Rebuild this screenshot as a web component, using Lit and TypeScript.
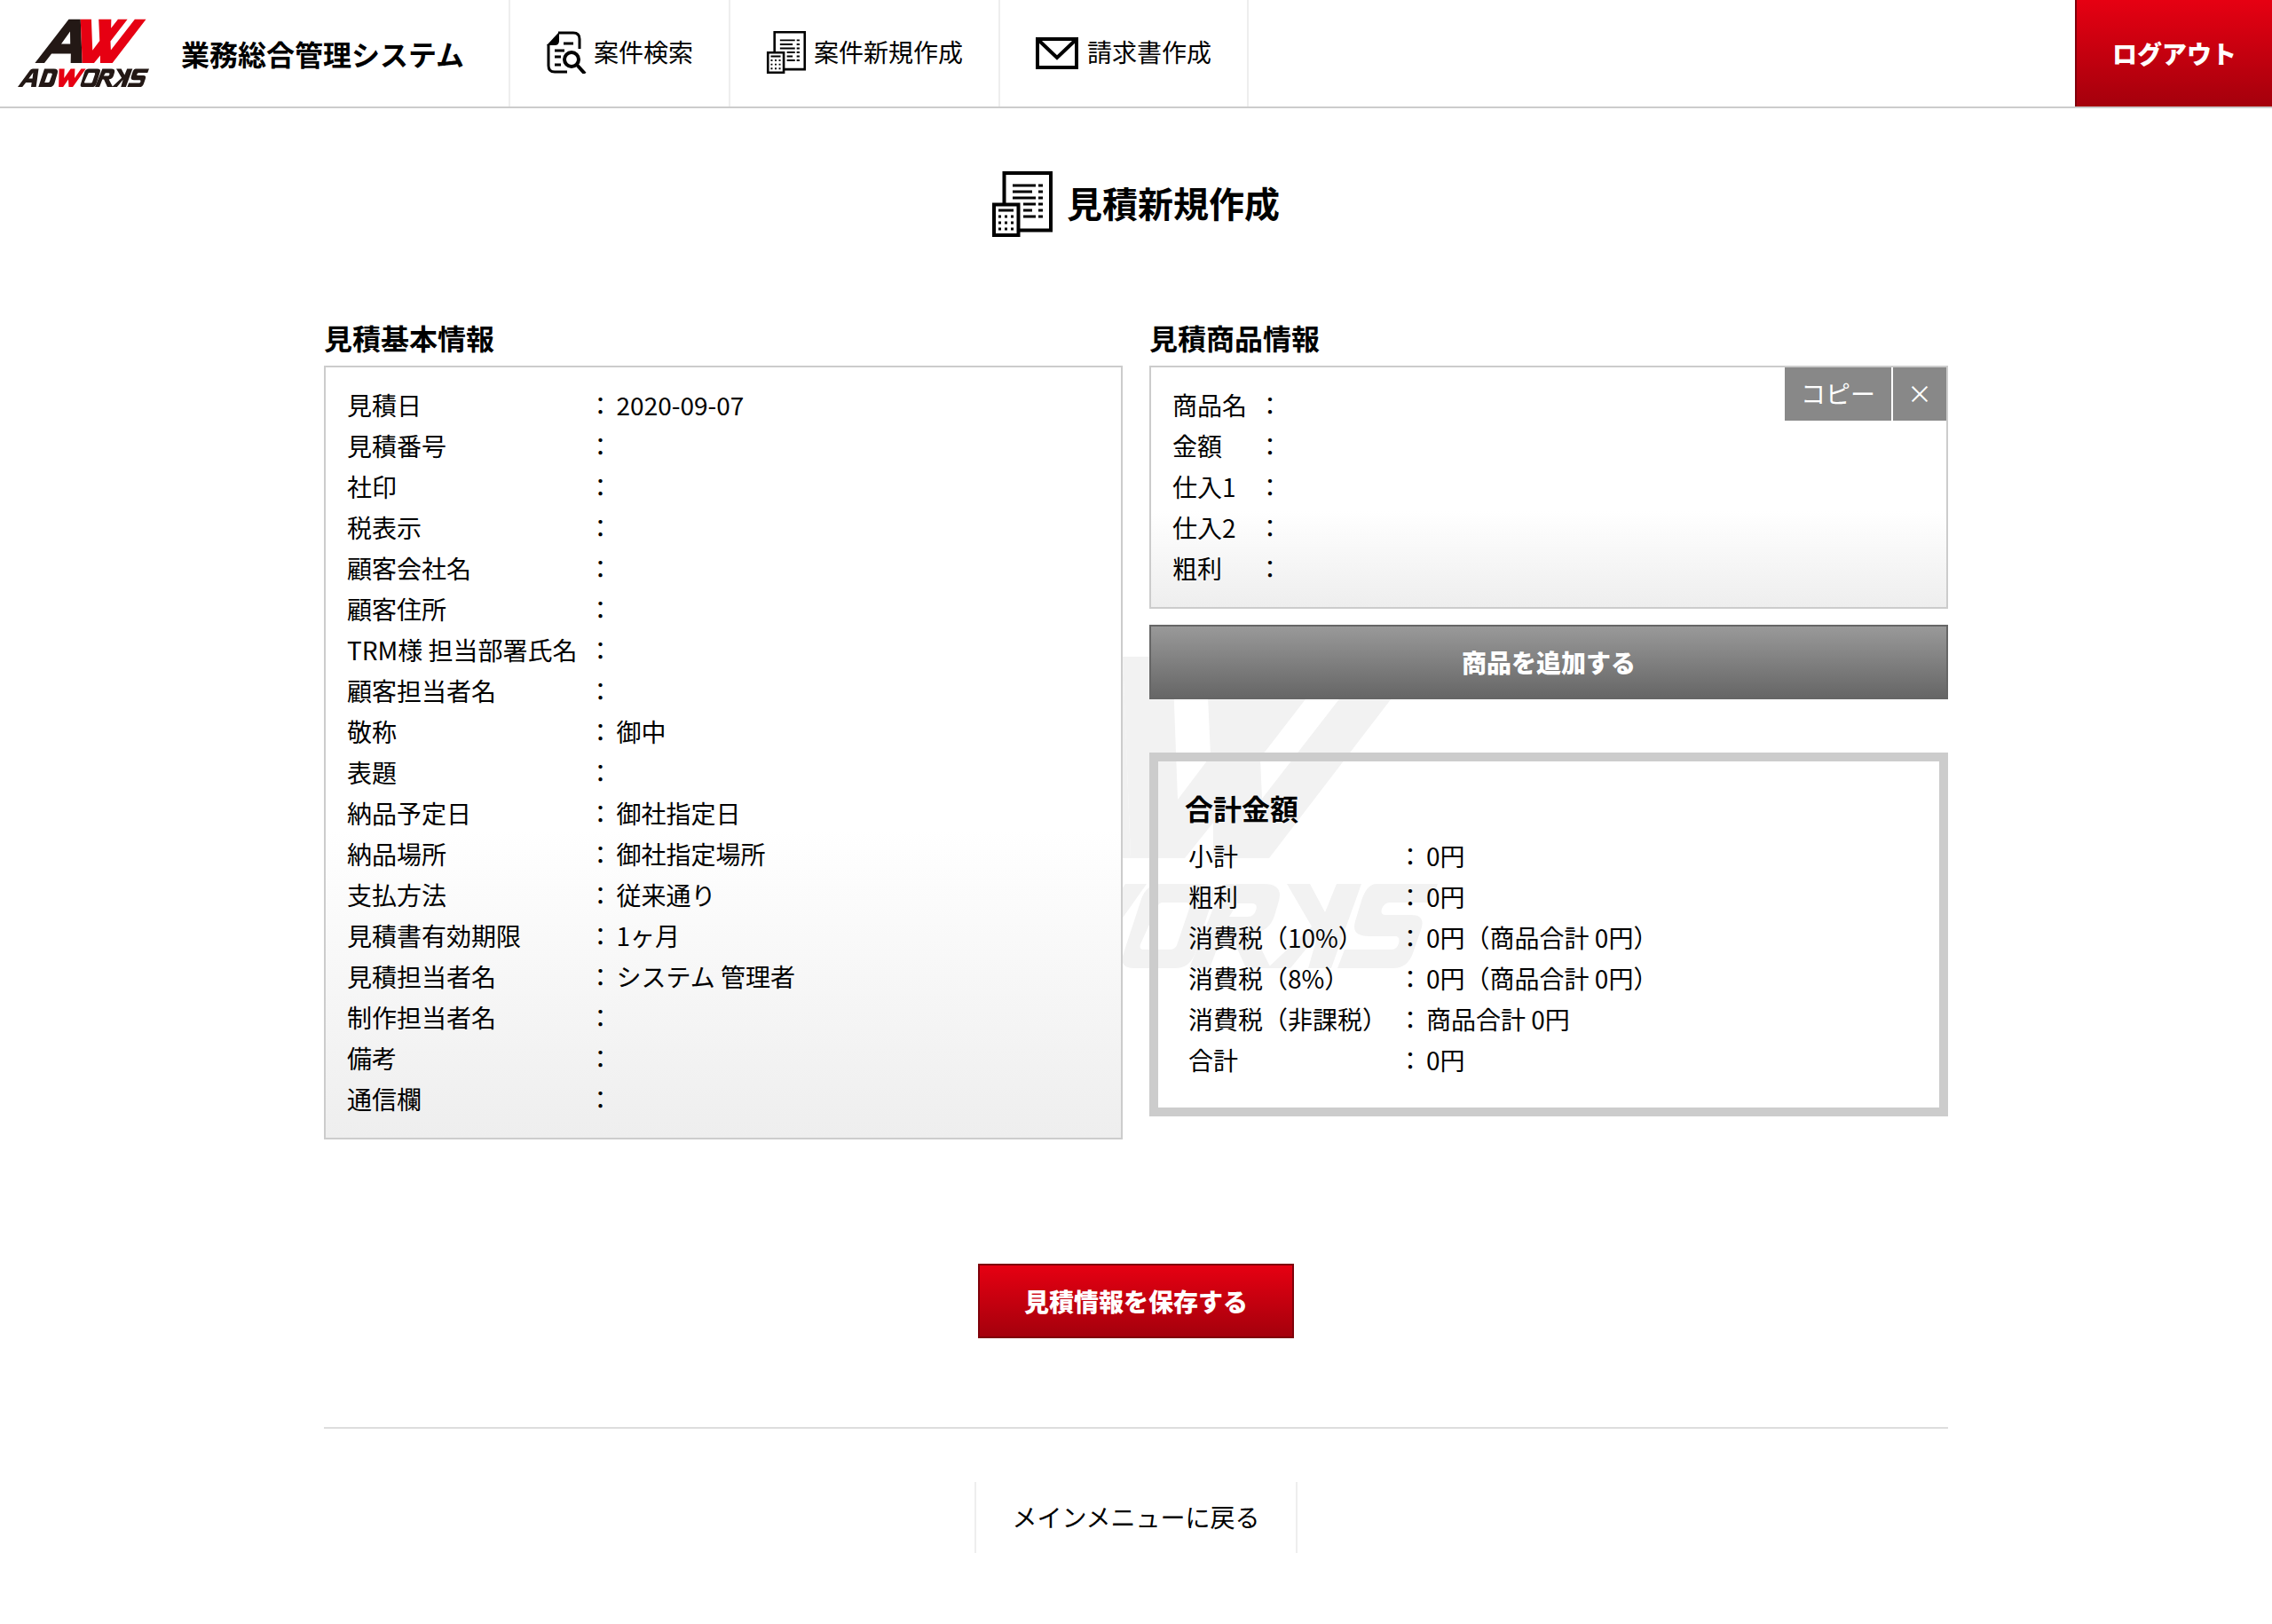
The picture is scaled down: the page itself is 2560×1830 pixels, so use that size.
import { LitElement, html, css, nothing } from "lit";
import { customElement } from "lit/decorators.js";

type Row = [label: string, value?: string];

const basicRows: Row[] = [
  ["見積日", "2020-09-07"],
  ["見積番号"],
  ["社印"],
  ["税表示"],
  ["顧客会社名"],
  ["顧客住所"],
  ["TRM様 担当部署氏名"],
  ["顧客担当者名"],
  ["敬称", "御中"],
  ["表題"],
  ["納品予定日", "御社指定日"],
  ["納品場所", "御社指定場所"],
  ["支払方法", "従来通り"],
  ["見積書有効期限", "1ヶ月"],
  ["見積担当者名", "システム 管理者"],
  ["制作担当者名"],
  ["備考"],
  ["通信欄"],
];

const productRows: Row[] = [["商品名"], ["金額"], ["仕入1"], ["仕入2"], ["粗利"]];

const totalRows: Row[] = [
  ["小計", "0円"],
  ["粗利", "0円"],
  ["消費税（10%）", "0円（商品合計 0円）"],
  ["消費税（8%）", "0円（商品合計 0円）"],
  ["消費税（非課税）", "商品合計 0円"],
  ["合計", "0円"],
];

const table = (rows: Row[]) => html`
  <table>
    <tbody>
      ${rows.map(
        ([label, value]) => html`<tr>
          <th scope="row">${label}</th>
          <td>：</td>
          <td>${value ?? nothing}</td>
        </tr>`
      )}
    </tbody>
  </table>
`;

/* Brand mark: big AW monogram over the slanted ADWORKS wordmark. */
const logo = (className: string, label: string) => html`
  <svg class=${className} viewBox="0 0 680 352" role="img" aria-label=${label}>
    <path class="ink" fill-rule="evenodd" d="M264 0H325L334 227H274L275 178H175L138 227H89ZM271 63L225 128H272Z" />
    <path
      class="accent"
      d="M325 0H381L387 161L424 112L419 0H484L483 46L519 0H568L480 114L482 160L606 0H664L490 227H427V187L395 227H334Z"
    />
    <path class="ink" fill-rule="evenodd" d="M0 351L64 263Q69 256 78 256H108L95 351H69L72 328H42L24 351ZM57 307H76L80 276Z" />
    <path
      class="ink"
      fill-rule="evenodd"
      d="M138 256H188Q212 256 206 278L190 332Q184 351 164 351H107ZM156 279L139 328H156Q163 328 165 322L178 286Q180 279 173 279Z"
    />
    <path class="accent" d="M214 256H242L240 305L274 256H296L294 305L328 256H352L285 351H264L262 312L235 351H212Z" />
    <path
      class="ink"
      fill-rule="evenodd"
      d="M368 256H412Q432 256 426 274L407 333Q401 351 384 351H338Q320 351 326 334L346 273Q352 256 368 256ZM370 277Q366 277 364 282L345 324Q343 330 349 330H378Q384 330 386 325L400 284Q402 277 396 277Z"
    />
    <path
      class="ink"
      fill-rule="evenodd"
      d="M438 256H484Q506 256 501 275L496 292Q490 310 472 311L492 351H464L446 311H438L423 351H400ZM454 278L445 293H466Q473 293 475 286Q478 278 470 278Z"
    />
    <path class="ink" d="M510 256H536L553 288L566 256H594L560 351H534L545 313L514 351H488L538 304Z" />
    <path
      class="ink"
      d="M611 256H680L672 277H626Q620 277 617 284Q615 291 621 291H650Q667 291 661 308L652 334Q646 351 630 351H567L575 330H628Q634 330 636 323Q638 315 632 315H602Q582 315 587 298L594 275Q600 256 611 256Z"
    />
  </svg>
`;

const searchIcon = html`
  <svg class="icon" viewBox="0 0 46 48" aria-hidden="true">
    <path class="line" d="M14 2H31Q38 2 38 9V20M3 15V39Q3 46 10 46H24" />
    <path d="M1 16L15 1V11Q15 16 10 16Z" />
    <path class="line" d="M20 14H31M10 22H21M10 29H17M10 38H17" />
    <circle class="line thick" cx="29" cy="32" r="8" />
    <path class="line thick" d="M35 38L44 48" />
  </svg>
`;

const estimateIcon = (className: string) => html`
  <svg class=${className} viewBox="0 0 68 74" aria-hidden="true">
    <path class="frame" d="M13.500 36V2H66V66.500H31" />
    <path class="frame" d="M2 37.500H29.500V72H2Z" />
    <path
      class="bars"
      d="M23 16H49M23 23H45M23 30H49M35 37H49M35 44H45M35 51H49M52 16H57M52 23H57M52 30H57M52 37H57M52 44H57M52 51H57M7 44H24"
    />
    <path class="bars" d="M7 51H10M14 51H17M21 51H24M7 58H10M14 58H17M21 58H24M7 65H10M14 65H17M21 65H24" />
  </svg>
`;

const mailIcon = html`
  <svg class="icon mail" viewBox="0 0 50 48" aria-hidden="true">
    <path class="line thick" d="M2 9H46V41H2Z" />
    <path class="line thick" d="M3 10L24 30L45 10" />
  </svg>
`;

@customElement("app-root")
export class AppRoot extends LitElement {
  static styles = css`
    :host {
      display: block;
      position: relative;
      min-height: 100vh;
      background: #fff;
      color: #000;
      font-family: "Noto Sans CJK JP", sans-serif;
      font-size: 28px;
      font-weight: 400;
      line-height: 44px;
    }
    * {
      box-sizing: border-box;
    }
    h1,
    h2 {
      margin: 0;
    }
    a {
      color: inherit;
      text-decoration: none;
    }
    button {
      font: inherit;
      color: #fff;
      cursor: pointer;
      margin: 0;
      border-radius: 0;
    }
    svg {
      display: block;
      flex: none;
    }
    .header {
      display: flex;
      height: 122px;
      border-bottom: 2px solid #ccc;
      background: #fff;
    }
    .brand {
      display: flex;
      align-items: center;
      gap: 36px;
      padding: 0 50px 0 20px;
      font-size: 32px;
      font-weight: 700;
      white-space: nowrap;
    }
    .logo {
      width: 148px;
      height: 78px;
    }
    .ink {
      fill: #231815;
    }
    .accent {
      fill: #e60012;
    }
    .nav {
      display: flex;
      border-right: 2px solid #eee;
    }
    .nav a {
      display: flex;
      align-items: center;
      gap: 8px;
      padding: 0 40px 2px;
      border-left: 2px solid #eee;
      white-space: nowrap;
    }
    .nav span {
      padding-bottom: 2px;
    }
    .icon {
      width: 46px;
      height: 48px;
    }
    .mail {
      width: 50px;
    }
    .line,
    .frame,
    .bars {
      fill: none;
      stroke: #000;
      stroke-width: 3;
    }
    .frame {
      stroke-width: 4;
    }
    .thick {
      stroke-width: 4;
    }
    .red {
      background: linear-gradient(#e60012, #a4000c);
      border: 2px solid #7f000a;
      font-weight: 900;
    }
    .logout {
      margin-left: auto;
      border-width: 0 0 0 2px;
      padding: 0 40px;
    }
    .watermark {
      position: absolute;
      z-index: 0;
      left: 50%;
      top: 740px;
      width: 680px;
      height: 352px;
      transform: translateX(-50%);
    }
    .watermark .ink,
    .watermark .accent {
      fill: #f2f2f2;
    }
    .main {
      position: relative;
      z-index: 1;
      max-width: 1830px;
      margin: 0 auto;
      padding: 70px 0 80px;
      display: flex;
      flex-direction: column;
      align-items: center;
    }
    .title {
      display: flex;
      align-items: center;
      gap: 16px;
      font-size: 40px;
      line-height: 72px;
    }
    .title span {
      padding-bottom: 4px;
    }
    .title-icon {
      width: 68px;
      height: 74px;
    }
    .columns {
      display: grid;
      grid-template-columns: 1fr 1fr;
      gap: 30px;
      align-items: start;
      width: 100%;
      margin-top: 90px;
    }
    h2 {
      font-size: 32px;
      padding-bottom: 10px;
    }
    .panel {
      position: relative;
      padding: 20px;
      border: 2px solid #ccc;
      background: linear-gradient(#fff 60%, #eee);
    }
    table {
      border-collapse: collapse;
    }
    th,
    td {
      padding: 0 2px 2px;
      font-weight: inherit;
      height: 46px;
      text-align: left;
      white-space: nowrap;
    }
    th {
      padding: 0 10px 2px 4px;
    }
    .tools {
      position: absolute;
      top: 0;
      right: 0;
      display: flex;
      gap: 2px;
    }
    .tools button {
      height: 60px;
      padding: 0 16px 2px;
      border: 0;
      background: #888;
    }
    .tools .copy {
      padding: 0 18px 2px;
    }
    .add {
      display: block;
      width: 100%;
      height: 84px;
      margin-top: 18px;
      border: 2px solid #666;
      background: linear-gradient(#999, #666);
      font-weight: 900;
    }
    .totals {
      margin-top: 60px;
      padding: 30px;
      border: 10px solid #ccc;
    }
    .save {
      height: 84px;
      margin-top: 140px;
      padding: 0 50px;
    }
    .back-row {
      display: flex;
      justify-content: center;
      width: 100%;
      margin-top: 100px;
      padding-top: 60px;
      border-top: 2px solid #ddd;
    }
    .back {
      padding: 17px 40px 19px;
      border: solid #eee;
      border-width: 0 2px;
    }
  `;

  render() {
    return html`
      <header class="header">
        <a class="brand" href="#">${logo("logo", "ADWORKS")}<span>業務総合管理システム</span></a>
        <nav class="nav">
          <a href="#search">${searchIcon}<span>案件検索</span></a>
          <a href="#new">${estimateIcon("icon")}<span>案件新規作成</span></a>
          <a href="#invoice">${mailIcon}<span>請求書作成</span></a>
        </nav>
        <button class="red logout" type="button">ログアウト</button>
      </header>
      ${logo("watermark", "ADWORKS")}
      <main class="main">
        <h1 class="title">${estimateIcon("title-icon")}<span>見積新規作成</span></h1>
        <div class="columns">
          <section>
            <h2>見積基本情報</h2>
            <div class="panel">${table(basicRows)}</div>
          </section>
          <div>
            <section>
              <h2>見積商品情報</h2>
              <div class="panel">
                ${table(productRows)}
                <div class="tools">
                  <button class="copy" type="button">コピー</button>
                  <button type="button">×</button>
                </div>
              </div>
              <button class="add" type="button">商品を追加する</button>
            </section>
            <section class="totals">
              <h2>合計金額</h2>
              ${table(totalRows)}
            </section>
          </div>
        </div>
        <button class="red save" type="button">見積情報を保存する</button>
        <div class="back-row"><a class="back" href="#menu">メインメニューに戻る</a></div>
      </main>
    `;
  }
}
